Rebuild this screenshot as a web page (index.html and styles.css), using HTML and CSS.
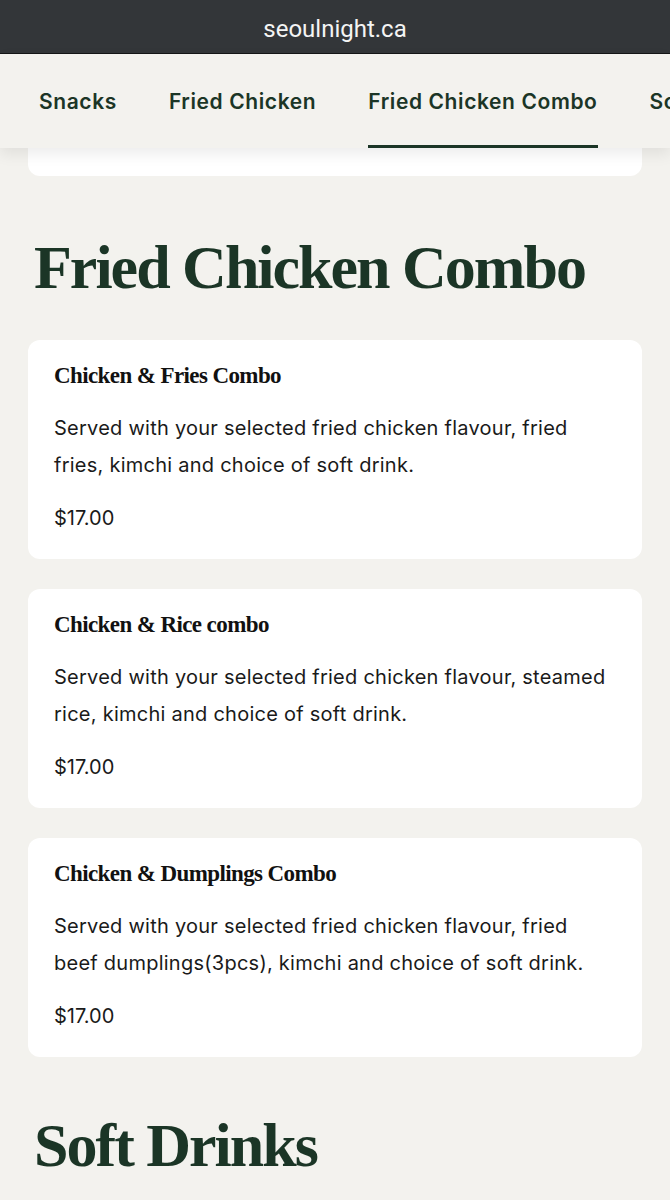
FILE: index.html
```html
<!DOCTYPE html>
<html lang="en">
<head>
    <meta charset="UTF-8">
    <meta name="viewport" content="width=device-width, initial-scale=1.0">
    <title>Seoul Night - Menu</title>
    <link rel="stylesheet" href="styles.css">
</head>
<body>
    <div class="url-bar">seoulnight.ca</div>

    <nav class="menu-nav">
        <a href="#snacks" class="nav-item">Snacks</a>
        <a href="#fried-chicken" class="nav-item">Fried Chicken</a>
        <a href="#combo" class="nav-item active">Fried Chicken Combo</a>
        <a href="#soft-drinks" class="nav-item">Soft Drinks</a>
    </nav>

    <main class="menu">
        <div class="card card-tail"></div>

        <section id="combo" class="menu-section">
            <h2 class="section-title">Fried Chicken Combo</h2>

            <div class="card">
                <h3 class="item-name">Chicken &amp; Fries Combo</h3>
                <p class="item-desc">Served with your selected fried chicken flavour, fried fries, kimchi and choice of soft drink.</p>
                <p class="item-price">$17.00</p>
            </div>

            <div class="card">
                <h3 class="item-name">Chicken &amp; Rice combo</h3>
                <p class="item-desc">Served with your selected fried chicken flavour, steamed rice, kimchi and choice of soft drink.</p>
                <p class="item-price">$17.00</p>
            </div>

            <div class="card">
                <h3 class="item-name">Chicken &amp; Dumplings Combo</h3>
                <p class="item-desc">Served with your selected fried chicken flavour, fried beef dumplings(3pcs), kimchi and choice of soft drink.</p>
                <p class="item-price">$17.00</p>
            </div>
        </section>

        <section id="soft-drinks" class="menu-section">
            <h2 class="section-title">Soft Drinks</h2>
        </section>
    </main>
</body>
</html>
```

FILE: styles.css
```css
* {
    margin: 0;
    padding: 0;
    box-sizing: border-box;
}

body {
    font-family: Inter, Roboto, 'Liberation Sans', sans-serif;
    background: #f3f2ee;
    color: #1a1a1a;
    overflow: hidden;
}

.url-bar {
    height: 54px;
    background: #333639;
    border-bottom: 1px solid #151617;
    color: #f4f4f4;
    font-family: Roboto, 'Liberation Sans', sans-serif;
    font-size: 24px;
    text-align: center;
    line-height: 59px;
}

/* category tabs, last one runs off the screen */
.menu-nav {
    position: relative;
    z-index: 2;
    display: flex;
    gap: 52px;
    height: 94px;
    padding: 0 39px;
    background: #f3f2ee;
    box-shadow: 0 6px 14px rgba(0, 0, 0, 0.08);
    white-space: nowrap;
    overflow: hidden;
}

.nav-item {
    display: flex;
    align-items: center;
    font-size: 21px;
    font-weight: 600;
    letter-spacing: 0.6px;
    color: #1b3526;
    text-decoration: none;
    border-bottom: 3px solid transparent;
    padding-top: 3px;
}

.nav-item.active {
    border-bottom-color: #1b3526;
}

.menu {
    padding: 0 28px;
}

.card {
    background: #fff;
    border-radius: 12px;
    padding: 22px 30px 27px 26px;
    margin-bottom: 30px;
}

.card-tail {
    height: 28px;
    padding: 0;
    border-radius: 0 0 12px 12px;
    margin-bottom: 0;
}

.section-title {
    font-family: 'Liberation Serif', 'DejaVu Serif', serif;
    font-size: 62px;
    font-weight: 700;
    letter-spacing: -2px;
    color: #1b3526;
    line-height: 66px;
    padding: 58px 0 40px 6px;
}

#soft-drinks .section-title {
    padding-top: 25px;
}

.item-name {
    font-family: 'Liberation Serif', 'DejaVu Serif', serif;
    font-size: 23px;
    font-weight: 700;
    letter-spacing: -0.6px;
    line-height: 28px;
    color: #111;
}

.item-desc {
    font-size: 20px;
    letter-spacing: 0.25px;
    line-height: 37px;
    margin-top: 20px;
}

.item-price {
    font-size: 20px;
    line-height: 28px;
    margin-top: 20px;
}
```
